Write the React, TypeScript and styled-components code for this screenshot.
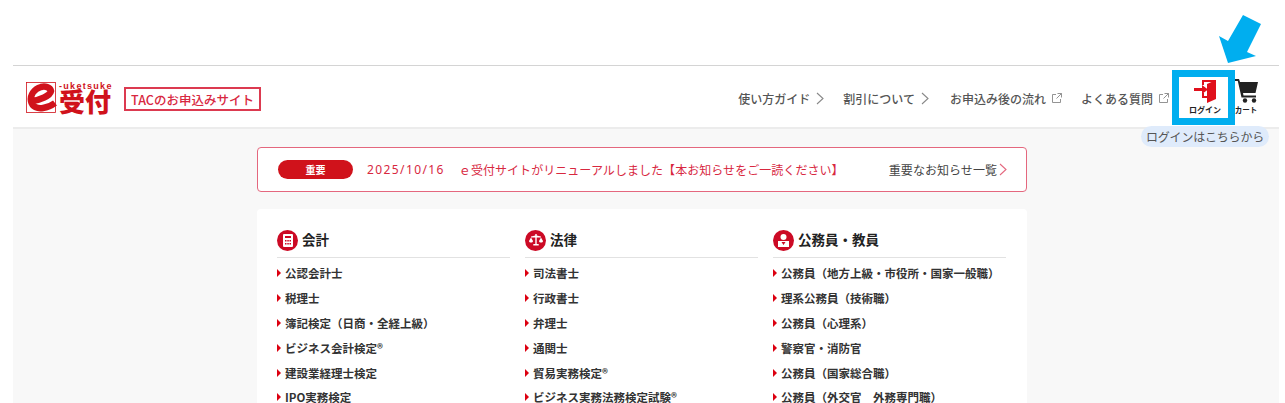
import styled, { createGlobalStyle } from 'styled-components';

const jp = `"Noto Sans CJK JP", "Noto Sans", sans-serif`;
const red = '#d0121b';

const GlobalStyle = createGlobalStyle`
  html, body {
    margin: 0;
    height: 403px;
    overflow: hidden;
    background: #fff;
    font-family: ${jp};
  }
`;

const Page = styled.div`
  position: relative;
  height: 403px;
  padding: 65px 6px 0 13px;
  box-sizing: border-box;
  overflow: hidden;
`;

const Header = styled.header`
  height: 64px;
  box-sizing: border-box;
  border-top: 1px solid #d4d4d4;
  border-bottom: 2px solid #ececec;
  display: flex;
  align-items: center;
  padding: 0 14px 0 13px;
`;

const LogoWrap = styled.div`
  position: relative;
  width: 87px;
  height: 31px;
  margin-top: 1px;
  flex: 0 0 auto;
`;

const LogoKana = styled.span`
  position: absolute;
  left: 33px;
  top: 0;
  font: 700 9px/8px "Liberation Sans", sans-serif;
  letter-spacing: 1.3px;
  color: ${red};
`;

const LogoKanji = styled.span`
  position: absolute;
  left: 33px;
  top: 8.5px;
  font: 900 26px/22px ${jp};
  color: ${red};
`;

const SiteTag = styled.div`
  margin: 5px 0 0 11px;
  height: 24px;
  width: 137px;
  box-sizing: border-box;
  border: 2px solid #dc3a50;
  display: flex;
  align-items: center;
  justify-content: center;
  font-size: 12.5px;
  font-weight: 500;
  color: #d8283f;
  white-space: nowrap;
`;

const Nav = styled.nav`
  margin-left: auto;
  display: flex;
  align-items: center;
  height: 100%;
`;

const NavLink = styled.a<{ $gap: number }>`
  display: flex;
  align-items: center;
  gap: 6px;
  margin-right: ${(p) => p.$gap}px;
  padding-top: 3px;
  font-size: 12px;
  font-weight: 500;
  color: #555;
  white-space: nowrap;
`;

const NavTool = styled.div<{ $width: number; $size: number }>`
  width: ${(p) => p.$width}px;
  display: flex;
  flex-direction: column;
  align-items: center;
  gap: 2px;
  font-size: ${(p) => p.$size}px;
  font-weight: 700;
  line-height: 10px;
  color: #222;
  white-space: nowrap;
`;

const Highlight = styled.div`
  position: absolute;
  left: 1172px;
  top: 70px;
  width: 63px;
  height: 55px;
  box-sizing: border-box;
  border: 7px solid #00aeef;
`;

const Arrow = styled.svg`
  position: absolute;
  left: 1218px;
  top: 14px;
`;

const Hint = styled.div`
  position: absolute;
  left: 1141px;
  top: 126px;
  width: 128px;
  height: 21px;
  border-radius: 11px;
  background: #dfebfb;
  display: flex;
  align-items: center;
  justify-content: center;
  font-size: 12px;
  letter-spacing: -0.2px;
  color: #555;
  white-space: nowrap;
`;

const Main = styled.main`
  height: 274px;
  background: #f8f8f8;
  padding-top: 18px;
  box-sizing: border-box;
  overflow: hidden;
`;

const Column = styled.div`
  width: 770px;
  margin-left: 244px;
`;

const Notice = styled.div`
  height: 45px;
  box-sizing: border-box;
  background: #fff;
  border: 1px solid #e4677e;
  border-radius: 4px;
  display: flex;
  align-items: center;
  padding: 0 19px 0 20px;
  color: #d8283f;
  font-size: 12px;
  letter-spacing: 0.05px;
  white-space: nowrap;
`;

const Badge = styled.span`
  width: 75px;
  height: 19px;
  border-radius: 10px;
  background: ${red};
  color: #fff;
  font-size: 10px;
  font-weight: 700;
  display: flex;
  align-items: center;
  justify-content: center;
  margin-right: 14px;
`;

const NoticeDate = styled.span`
  margin-right: 14px;
  font-family: "Noto Sans", sans-serif;
  letter-spacing: 1.4px;
`;

const NoticeMore = styled.a`
  margin-left: auto;
  display: flex;
  align-items: center;
  gap: 2px;
  color: #444;
`;

const Card = styled.section`
  margin-top: 17px;
  background: #fff;
  border-radius: 4px 4px 0 0;
  padding: 21px 20px 0;
  display: grid;
  grid-template-columns: repeat(3, 233px);
  column-gap: 15px;
`;

const CategoryHead = styled.div`
  display: flex;
  align-items: center;
  gap: 4px;
  padding-bottom: 6px;
  border-bottom: 1px solid #e2e2e2;
  font-size: 13.5px;
  line-height: 21px;
  font-weight: 700;
  color: #222;
`;

const CategoryTitle = styled.span`
  margin-top: -2px;
`;

const CategoryIcon = styled.span`
  width: 21px;
  height: 21px;
  border-radius: 50%;
  background: #cc0a25;
  display: flex;
  align-items: center;
  justify-content: center;
  flex: 0 0 auto;
`;

const List = styled.ul`
  list-style: none;
  margin: 3px 0 0;
  padding: 0;
`;

const Item = styled.li`
  height: 24.8px;
  display: flex;
  align-items: center;
  gap: 4px;
  font-size: 11.5px;
  font-weight: 700;
  color: #333;
  white-space: nowrap;

  &::before {
    content: '';
    border-left: 4px solid #dc0010;
    border-top: 4px solid transparent;
    border-bottom: 4px solid transparent;
  }
`;

function Chevron({ color = '#888' }: { color?: string }) {
  return (
    <svg width="8" height="13" viewBox="0 0 8 13" fill="none" stroke={color} strokeWidth="1.1">
      <path d="M1 1l6 5.500L1 12" />
    </svg>
  );
}

function External() {
  return (
    <svg width="10" height="10" viewBox="0 0 10 10" fill="none" stroke="#888" strokeWidth="0.9">
      <path d="M4 1.500H.5v8h8V6M5.500.5h4v4M9.500.5L4.500 5.500" />
    </svg>
  );
}

function EMark() {
  return (
    <svg width="32" height="31" viewBox="0 0 32 31" style={{ position: 'absolute', left: 0, top: 0 }}>
      <rect x="0.5" y="0.5" width="29" height="30" fill="#fff" stroke={red} strokeWidth="0.8" />
      <path
        fill="none"
        stroke={red}
        strokeWidth="6.500"
        d="M6 19C14 18 24 14 25 9 24 5 19 4 15 5 8 7 4 13 5 19 6 25 12 27 17 26 21 25.500 25 24 29 21"
      />
    </svg>
  );
}

function LoginIcon() {
  return (
    <svg width="23" height="24" viewBox="0 0 23 24">
      <path fill="#e0101c" d="M8 1h14v2H10v3H8zM8 14h2v3h3v2H8z" />
      <path fill="#e0101c" d="M13 5l9-4v19l-9 4z" />
      <path fill="#e0101c" d="M0 9h8V6l6 4.500L8 15v-3H0z" />
    </svg>
  );
}

function CartIcon() {
  return (
    <svg width="23" height="24" viewBox="0 0 23 24">
      <path fill="#222" d="M0 0h4l1 3h18l-2.500 11H8l.5 2.500H21v2H6.500L2.800 2H0z" />
      <circle cx="10" cy="21.500" r="2.200" fill="#222" />
      <circle cx="19" cy="21.500" r="2.200" fill="#222" />
    </svg>
  );
}

function CalcIcon() {
  return (
    <svg width="10" height="13" viewBox="0 0 10 13">
      <path fill="#fff" fillRule="evenodd" d="M1 0h8a1 1 0 011 1v11a1 1 0 01-1 1H1a1 1 0 01-1-1V1a1 1 0 011-1zm1 2v2h6V2zm0 4v1.500h1.500V6zm2.300 0v1.500h1.500V6zm2.200 0v1.500H8V6zM2 9v1.500h1.500V9zm2.300 0v1.500h1.500V9zm2.200 0v1.500H8V9z" />
    </svg>
  );
}

function ScaleIcon() {
  return (
    <svg width="14" height="13" viewBox="0 0 14 13">
      <path fill="#fff" d="M6.300 0h1.400v1.500L12 2.500v1H2v-1l4.300-1zM6.300 3.500h1.400V10h2v1.500H4.300V10h2z" />
      <path fill="#fff" d="M0 7l2-3.500L4 7c0 1-1 1.500-2 1.500S0 8 0 7zM10 7l2-3.500L14 7c0 1-1 1.500-2 1.500S10 8 10 7z" />
    </svg>
  );
}

function PersonIcon() {
  return (
    <svg width="13" height="13" viewBox="0 0 13 13">
      <circle cx="6.500" cy="3" r="3" fill="#fff" />
      <path fill="#fff" fillRule="evenodd" d="M1 7h11v6H1zm3.500 1L6.500 11 8.500 8z" />
    </svg>
  );
}

const categories = [
  {
    title: '会計',
    icon: <CalcIcon />,
    items: ['公認会計士', '税理士', '簿記検定（日商・全経上級）', 'ビジネス会計検定®', '建設業経理士検定', 'IPO実務検定'],
  },
  {
    title: '法律',
    icon: <ScaleIcon />,
    items: ['司法書士', '行政書士', '弁理士', '通関士', '貿易実務検定®', 'ビジネス実務法務検定試験®'],
  },
  {
    title: '公務員・教員',
    icon: <PersonIcon />,
    items: [
      '公務員（地方上級・市役所・国家一般職）',
      '理系公務員（技術職）',
      '公務員（心理系）',
      '警察官・消防官',
      '公務員（国家総合職）',
      '公務員（外交官　外務専門職）',
    ],
  },
];

export default function App() {
  return (
    <>
      <GlobalStyle />
      <Page>
        <Header>
          <LogoWrap>
            <EMark />
            <LogoKana>-uketsuke</LogoKana>
            <LogoKanji>受付</LogoKanji>
          </LogoWrap>
          <SiteTag>TACのお申込みサイト</SiteTag>
          <Nav>
            <NavLink $gap={19}>
              使い方ガイド <Chevron />
            </NavLink>
            <NavLink $gap={21}>
              割引について <Chevron />
            </NavLink>
            <NavLink $gap={19}>
              お申込み後の流れ <External />
            </NavLink>
            <NavLink $gap={14}>
              よくある質問 <External />
            </NavLink>
            <NavTool $width={44} $size={8}>
              <LoginIcon />
              ログイン
            </NavTool>
            <NavTool $width={38} $size={7.5}>
              <CartIcon />
              カート
            </NavTool>
          </Nav>
        </Header>
        <Main>
          <Column>
            <Notice>
              <Badge>重要</Badge>
              <NoticeDate>2025/10/16</NoticeDate>
              ｅ受付サイトがリニューアルしました【本お知らせをご一読ください】
              <NoticeMore>
                重要なお知らせ一覧 <Chevron color="#e4677e" />
              </NoticeMore>
            </Notice>
            <Card>
              {categories.map((c) => (
                <div key={c.title}>
                  <CategoryHead>
                    <CategoryIcon>{c.icon}</CategoryIcon>
                    <CategoryTitle>{c.title}</CategoryTitle>
                  </CategoryHead>
                  <List>
                    {c.items.map((it) => (
                      <Item key={it}>{it}</Item>
                    ))}
                  </List>
                </div>
              ))}
            </Card>
          </Column>
        </Main>
        <Highlight />
        <Arrow width="44" height="50" viewBox="0 0 44 50">
          <path fill="#00aeef" d="M25 1l18 9-14 28 9 4-28 7L1 22l9 5z" />
        </Arrow>
        <Hint>ログインはこちらから</Hint>
      </Page>
    </>
  );
}
